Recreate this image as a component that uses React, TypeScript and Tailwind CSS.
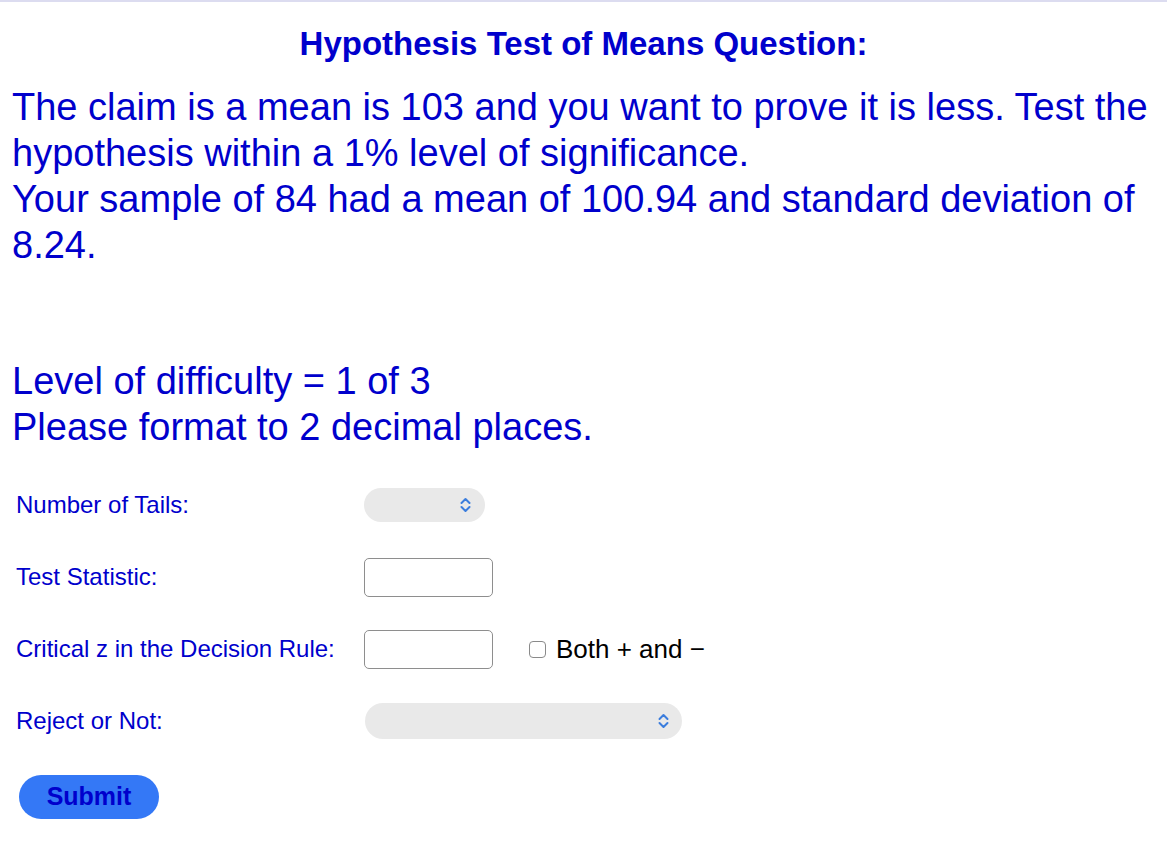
import { FC } from "react";

const Chevron: FC = () => (
  <svg width="13" height="16" viewBox="0 0 13 16" fill="none">
    <path d="M2.5 6 6.5 2l4 4M2.5 10l4 4 4-4" stroke="#3b7ddd" strokeWidth="2" strokeLinecap="round" strokeLinejoin="round" />
  </svg>
);

const App: FC = () => {
  return (
    <div className="w-[1167px] h-[853px] bg-white border-t-2 border-[#dcdcf0] text-[#0000cc] font-['Liberation_Sans',Arial,sans-serif]">
      <h1 className="text-center font-bold text-[33px] leading-[34px] pt-[25px]">
        Hypothesis Test of Means Question:
      </h1>
      <div className="px-3 pt-[23px] text-[38px] leading-[46px]">
        <p>
          The claim is a mean is 103 and you want to prove it is less. Test the hypothesis within a 1% level of
          significance.
          <br />
          Your sample of 84 had a mean of 100.94 and standard deviation of 8.24.
        </p>
        <p className="mt-[90px]">Level of difficulty = 1 of 3</p>
        <p>Please format to 2 decimal places.</p>
      </div>
      <div className="pl-4 pt-[19px] text-[24px]">
        <div className="flex items-center h-[72px]">
          <span className="w-[348px]">Number of Tails:</span>
          <div className="w-[121px] h-[34px] rounded-full bg-[#e9e9e9] flex items-center justify-end pr-[13px]">
            <Chevron />
          </div>
        </div>
        <div className="flex items-center h-[72px]">
          <span className="w-[348px]">Test Statistic:</span>
          <div className="w-[129px] h-[39px] rounded-[5px] border border-[#8e8e8e] bg-white" />
        </div>
        <div className="flex items-center h-[72px]">
          <span className="w-[348px]">Critical z in the Decision Rule:</span>
          <div className="w-[129px] h-[39px] rounded-[5px] border border-[#8e8e8e] bg-white" />
          <div className="ml-[36px] w-[17px] h-[17px] rounded-[4px] border border-[#8a8a8a]" />
          <span className="ml-[10px] text-[26px] text-black">Both + and −</span>
        </div>
        <div className="flex items-center h-[72px]">
          <span className="w-[349px]">Reject or Not:</span>
          <div className="w-[317px] h-[36px] rounded-full bg-[#e9e9e9] flex items-center justify-end pr-[12px]">
            <Chevron />
          </div>
        </div>
        <button className="mt-[18px] ml-[3px] w-[140px] h-[44px] rounded-full bg-[#3478f6] text-[#0000cc] font-bold text-[25px]">
          Submit
        </button>
      </div>
    </div>
  );
};

export default App;
